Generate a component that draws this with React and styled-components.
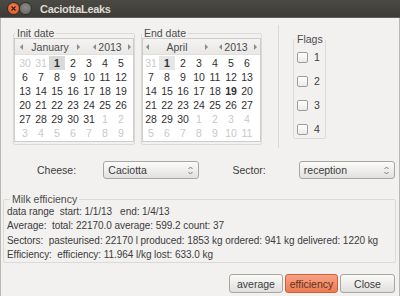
import styled, { createGlobalStyle } from 'styled-components'

const GlobalStyle = createGlobalStyle`
  html, body { margin: 0; padding: 0; background: #f2f1f0; }
  body {
    font-family: "Liberation Sans", Arial, sans-serif;
    font-size: 10px;
    color: #3c3c3c;
  }
`

const Window = styled.div`
  width: 400px;
  height: 296px;
  display: flex;
  flex-direction: column;
  background: #f2f1f0;
  overflow: hidden;
`

const TitleBar = styled.div`
  height: 18px;
  flex: none;
  display: flex;
  align-items: center;
  padding-left: 8px;
  background: linear-gradient(#4b4a45, #3c3b37);
  border-bottom: 1px solid #5f5e5a;
  box-sizing: border-box;
`

const WinButton = styled.span`
  width: 11px;
  height: 11px;
  border-radius: 50%;
  margin-right: 1px;
  display: flex;
  align-items: center;
  justify-content: center;
  background: ${p => (p.$close
    ? 'radial-gradient(circle at 50% 40%, #f5885c, #dd4814)'
    : 'radial-gradient(circle at 50% 40%, #8e8c87, #62615d)')};
  box-shadow: 0 0 0 1px #2f2e2b;
`

const Title = styled.span`
  margin-left: 8px;
  font-weight: bold;
  font-size: 11px;
  letter-spacing: -0.3px;
  color: #dfdbd2;
`

const Body = styled.div`
  flex: 1;
  display: flex;
  flex-direction: column;
  padding: 0 4px 0 2px;
  border-left: 1px solid #b9b7b3;
  border-right: 1px solid #b9b7b3;
`

const TopRow = styled.div`
  display: flex;
  margin-top: 7px;
  height: 123px;
`

const CalArea = styled.div`
  width: 265px;
  display: flex;
  gap: 6px;
  padding: 3px 0 0 10px;
  border-right: 1px solid #dad8d4;
`

const Group = styled.fieldset`
  margin: 0;
  padding: 0;
  border: 1px solid #dcdad6;
  border-radius: 2px;
  width: ${p => p.$w}px;
  height: ${p => p.$h}px;
  box-sizing: border-box;
`

const Legend = styled.legend`
  padding: 0 2px;
  margin-left: ${p => p.$ml || 0}px;
  line-height: 11px;
  font-size: 10.5px;
  color: #4c4c4c;
`

const Calendar = styled.div`
  background: #fff;
  border: 1px solid #cfcdc9;
  margin: -1px 0 0 0;
  height: 104px;
  box-sizing: border-box;
  display: flex;
  flex-direction: column;
`

const CalHeader = styled.div`
  height: 15px;
  flex: none;
  display: flex;
  align-items: center;
  background: linear-gradient(#f4f3f2, #e9e8e6);
  border-bottom: 1px solid #e0dfdc;
  color: #4c4c4c;
  padding-left: ${p => p.$pl}px;
  font-size: 10.5px;
`

const Arrow = styled.span`
  flex: none;
  width: 0;
  height: 0;
  border-top: 3px solid transparent;
  border-bottom: 3px solid transparent;
  ${p => (p.$dir === 'left'
    ? 'border-right: 3px solid #8a8a8a;'
    : 'border-left: 3px solid #8a8a8a;')}
  margin-left: ${p => p.$ml || 0}px;
`

const MonthName = styled.span`
  width: ${p => p.$w}px;
  flex: none;
  text-align: center;
`

const Year = styled.span`
  width: 28px;
  flex: none;
  text-align: center;
`

const DayGrid = styled.div`
  display: grid;
  grid-template-columns: repeat(7, 16px);
  grid-auto-rows: 14px;
  padding: 1px 0 0 ${p => p.$pl}px;
`

const Day = styled.span`
  display: flex;
  align-items: center;
  justify-content: center;
  font-size: 10.5px;
  color: ${p => (p.$out ? '#c9c9c9' : '#303030')};
  font-weight: ${p => (p.$bold ? 'bold' : 'normal')};
  background: ${p => p.$sel || 'transparent'};
`

const FlagsBox = styled.div`
  margin: 9px 0 0 14px;
`

const CheckRow = styled.label`
  display: flex;
  align-items: center;
  height: 24px;
  padding-left: 3px;
  gap: 6px;
  font-size: 10.5px;
  color: #3c3c3c;
`

const CheckBox = styled.span`
  width: 9px;
  height: 9px;
  border: 1px solid #9e9d9a;
  border-radius: 2px;
  background: linear-gradient(#ffffff, #ecebea);
`

const ComboRow = styled.div`
  display: flex;
  align-items: center;
  margin-top: 13px;
  height: 18px;
  padding-left: 34px;
  font-size: 10.5px;
`

const ComboLabel = styled.span`
  width: ${p => p.$w}px;
  margin-left: ${p => p.$ml || 0}px;
  color: #3c3c3c;
`

const Combo = styled.div`
  width: ${p => p.$w}px;
  height: 18px;
  box-sizing: border-box;
  border: 1px solid #a8a6a2;
  border-radius: 3px;
  background: linear-gradient(#fbfbfa, #e2e1df);
  display: flex;
  align-items: center;
  justify-content: space-between;
  padding: 0 5px 0 4px;
  color: #3c3c3c;
`

const InfoGroup = styled.fieldset`
  margin: 15px 0 0 0;
  padding: 0 0 0 3px;
  border: 1px solid #dcdad6;
  border-radius: 2px;
  width: 393px;
  box-sizing: border-box;
  font-size: 10px;
`

const InfoLine = styled.div`
  line-height: 14.3px;
  white-space: pre;
  letter-spacing: -0.05px;
  color: #3c3c3c;
`

const ButtonRow = styled.div`
  display: flex;
  justify-content: flex-end;
  gap: 2px;
  margin-top: 11px;
`

const Button = styled.button`
  width: ${p => p.$w}px;
  height: 19px;
  padding: 0;
  font-family: inherit;
  font-size: 10.5px;
  border-radius: 3px;
  border: 1px solid ${p => (p.$primary ? '#c8613c' : '#a8a6a2')};
  background: ${p => (p.$primary
    ? 'linear-gradient(#f7a285, #ee7a52)'
    : 'linear-gradient(#fafaf9, #e0dfdd)')};
  color: ${p => (p.$primary ? '#5e3222' : '#3c3c3c')};
`

const Updown = () => (
  <svg width="5" height="9" viewBox="0 0 5 9">
    <path d="M0.5 3 L2.5 1 L4.5 3 M0.5 6 L2.5 8 L4.5 6" fill="none" stroke="#7a7a7a" strokeWidth="1" />
  </svg>
)

const initDays = [
  [30, 31, 1, 2, 3, 4, 5],
  [6, 7, 8, 9, 10, 11, 12],
  [13, 14, 15, 16, 17, 18, 19],
  [20, 21, 22, 23, 24, 25, 26],
  [27, 28, 29, 30, 31, 1, 2],
  [3, 4, 5, 6, 7, 8, 9],
]

const endDays = [
  [31, 1, 2, 3, 4, 5, 6],
  [7, 8, 9, 10, 11, 12, 13],
  [14, 15, 16, 17, 18, 19, 20],
  [21, 22, 23, 24, 25, 26, 27],
  [28, 29, 30, 1, 2, 3, 4],
  [5, 6, 7, 8, 9, 10, 11],
]

function MonthView({ month, monthW, yearGap, days, pl, headPl, selColor, today }) {
  return (
    <Calendar>
      <CalHeader $pl={headPl}>
        <Arrow $dir="left" />
        <MonthName $w={monthW}>{month}</MonthName>
        <Arrow $dir="right" />
        <Arrow $dir="left" $ml={yearGap} />
        <Year>2013</Year>
        <Arrow $dir="right" $ml={4} />
      </CalHeader>
      <DayGrid $pl={pl}>
        {days.map((row, r) => row.map((d, c) => {
          const out = (r === 0 && d > 20) || (r >= 4 && d < 15)
          const sel = !out && d === 1
          return (
            <Day key={r + '-' + c} $out={out} $bold={sel || (!out && d === today)} $sel={sel ? selColor : null}>
              {d}
            </Day>
          )
        }))}
      </DayGrid>
    </Calendar>
  )
}

export default function App() {
  return (
    <Window>
      <GlobalStyle />
      <TitleBar>
        <WinButton $close>
          <svg width="5" height="5" viewBox="0 0 5 5">
            <path d="M0.5 0.5 L4.5 4.5 M4.5 0.5 L0.5 4.5" stroke="#3a1a0e" strokeWidth="1.2" />
          </svg>
        </WinButton>
        <WinButton />
        <Title>CaciottaLeaks</Title>
      </TitleBar>
      <Body>
        <TopRow>
          <CalArea>
            <Group $w={122} $h={117}>
              <Legend $ml={1}>Init date</Legend>
              <MonthView month="January" monthW={54} yearGap={13} days={initDays} pl={2} headPl={5} selColor="#d9d9d9" />
            </Group>
            <Group $w={121} $h={117}>
              <Legend>End date</Legend>
              <MonthView month="April" monthW={56} yearGap={11} days={endDays} pl={0} headPl={3} selColor="#e6e6e6" today={19} />
            </Group>
          </CalArea>
          <FlagsBox>
            <Group $w={30} $h={105}>
              <Legend $ml={1}>Flags</Legend>
              {[1, 2, 3, 4].map(n => (
                <CheckRow key={n}>
                  <CheckBox />
                  {n}
                </CheckRow>
              ))}
            </Group>
          </FlagsBox>
        </TopRow>
        <ComboRow>
          <ComboLabel $w={67}>Cheese:</ComboLabel>
          <Combo $w={96}>Caciotta<Updown /></Combo>
          <ComboLabel $w={67} $ml={34}>Sector:</ComboLabel>
          <Combo $w={97}>reception<Updown /></Combo>
        </ComboRow>
        <InfoGroup>
          <Legend $ml={3}>Milk efficiency</Legend>
          <InfoLine>data range  start: 1/1/13   end: 1/4/13</InfoLine>
          <InfoLine>Average:  total: 22170.0 average: 599.2 count: 37</InfoLine>
          <InfoLine>Sectors:  pasteurised: 22170 l produced: 1853 kg ordered: 941 kg delivered: 1220 kg</InfoLine>
          <InfoLine>Efficiency:  efficiency: 11.964 l/kg lost: 633.0 kg</InfoLine>
        </InfoGroup>
        <ButtonRow>
          <Button $w={54}>average</Button>
          <Button $w={53} $primary>efficiency</Button>
          <Button $w={55}>Close</Button>
        </ButtonRow>
      </Body>
    </Window>
  )
}
